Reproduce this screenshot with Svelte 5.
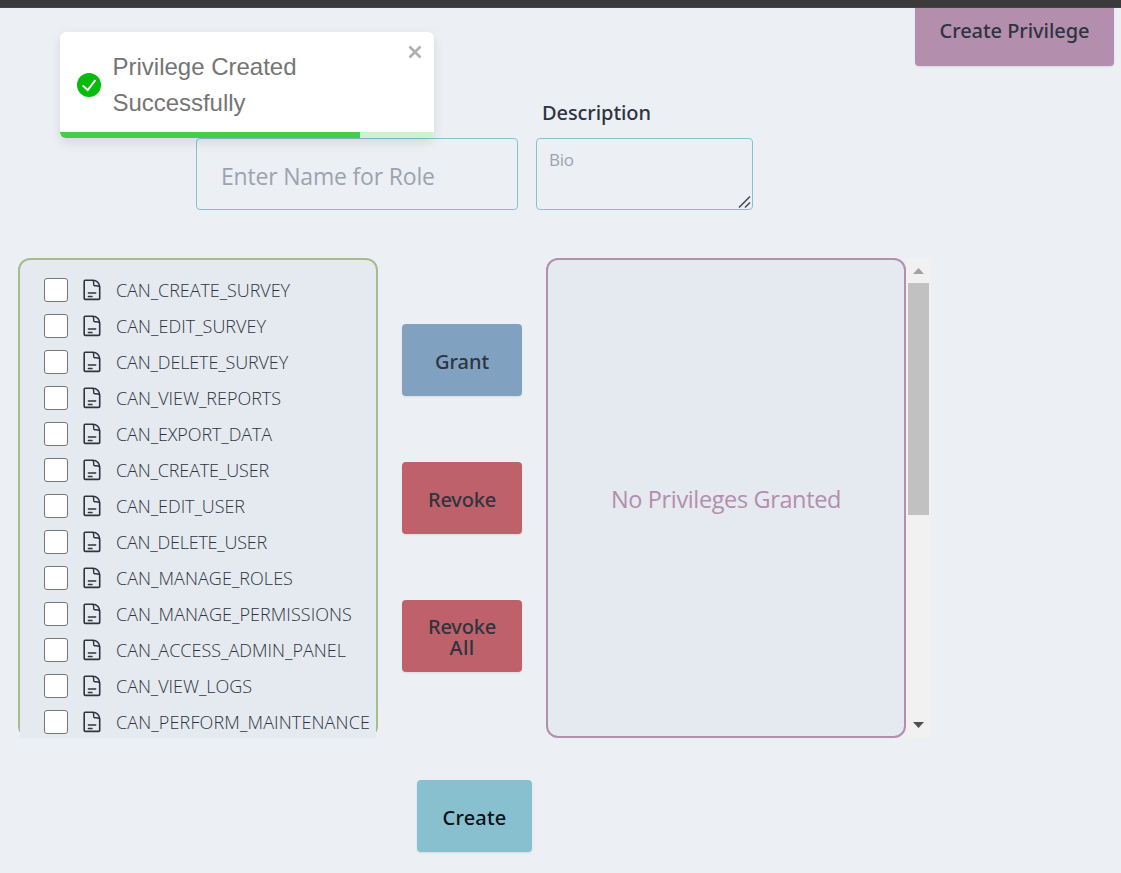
<script>
  const privileges = [
    { name: 'CAN_CREATE_SURVEY', width: 174 },
    { name: 'CAN_EDIT_SURVEY', width: 150 },
    { name: 'CAN_DELETE_SURVEY', width: 172 },
    { name: 'CAN_VIEW_REPORTS', width: 165 },
    { name: 'CAN_EXPORT_DATA', width: 156 },
    { name: 'CAN_CREATE_USER', width: 153 },
    { name: 'CAN_EDIT_USER', width: 129 },
    { name: 'CAN_DELETE_USER', width: 151 },
    { name: 'CAN_MANAGE_ROLES', width: 177 },
    { name: 'CAN_MANAGE_PERMISSIONS', width: 236 },
    { name: 'CAN_ACCESS_ADMIN_PANEL', width: 230 },
    { name: 'CAN_VIEW_LOGS', width: 136 },
    { name: 'CAN_PERFORM_MAINTENANCE', width: 254 }
  ];

  function fit(node, width) {
    const apply = () => {
      node.style.letterSpacing = '0px';
      const natural = node.getBoundingClientRect().width;
      node.style.letterSpacing = (width - natural) / node.textContent.length + 'px';
    };
    apply();
    document.fonts?.ready.then(apply);
  }
</script>

<div class="page">
  <div class="topbar"></div>
  <header><button class="btn privilege"><span use:fit={150}>Create Privilege</span></button></header>

  <div class="fields">
    <input class="role" aria-label="Role name" placeholder="Enter Name for Role" />
    <div class="description">
      <label for="bio"><span use:fit={109}>Description</span></label>
      <div class="bio-wrap">
        <textarea id="bio" placeholder="Bio"></textarea>
        <svg class="grip" width="14" height="14" viewBox="0 0 14 14"><path d="M1 12.5 12 1.5M7 12.5l5-5" stroke="#484b50" stroke-width="1.6" /></svg>
      </div>
    </div>
  </div>

  <main>
    <div class="available">
      <ul>
        {#each privileges as p}
          <li>
            <input type="checkbox" aria-label={p.name} />
            <svg width="24" height="24" viewBox="0 0 24 24" fill="none" stroke="#2e3440" stroke-width="1.6" stroke-linejoin="round" stroke-linecap="round">
              <path d="M5.2 2.3h7.6c4 0 6.9 3 6.9 7v11.1c0 .6-.4 1-1 1H5.2c-.6 0-1-.4-1-1V3.3c0-.6.4-1 1-1Z" />
              <path d="M12.8 2.5c1.3 1 .9 2.5.9 4.300 0 .6.4 1 1 1 1.8 0 3.5-.3 4.900 1" stroke-width="1.4" />
              <path d="M8.4 15h7.3M8.4 18.5h3.6" stroke-width="1.5" />
            </svg>
            <span use:fit={p.width}>{p.name}</span>
          </li>
        {/each}
      </ul>
    </div>
    <div class="actions">
      <button class="btn grant"><span use:fit={54}>Grant</span></button>
      <button class="btn revoke"><span use:fit={68}>Revoke</span></button>
      <button class="btn revoke two"><span use:fit={68}>Revoke</span><span use:fit={25}>All</span></button>
    </div>
    <div class="granted"><span use:fit={230}>No Privileges Granted</span></div>
    <div class="scrollbar">
      <svg width="25" height="25" viewBox="0 0 25 25"><path d="M7 16h11l-5.5-6Z" fill="#a3a3a3" /></svg>
      <div class="thumb"></div>
      <svg class="down" width="25" height="25" viewBox="0 0 25 25"><path d="M7 9h11l-5.5 6Z" fill="#505050" /></svg>
    </div>
  </main>

  <footer><button class="btn create"><span use:fit={64}>Create</span></button></footer>

  <div class="toast">
    <div class="message">
      <svg width="24" height="24" viewBox="0 0 24 24"><circle cx="12" cy="12" r="12" fill="#07bc0c" /><path d="m5.7 12.500 5 4.500L18.300 7.200" fill="none" stroke="#fff" stroke-width="1.9" /></svg>
      <p><span use:fit={184}>Privilege Created</span><br /><span use:fit={133}>Successfully</span></p>
      <svg class="close" width="14" height="14" viewBox="0 0 14 14"><path d="m1.500 1.500 11 11m0-11-11 11" stroke="#b0b0b0" stroke-width="2.7" /></svg>
    </div>
    <div class="progress"><div></div></div>
  </div>
</div>

<style>
  :global(body) { margin: 0; background: #eceff4; overflow: hidden; }
  * { box-sizing: border-box; }
  .page {
    position: relative;
    width: 1121px;
    height: 873px;
    overflow: hidden;
    background: #eceff4;
    color: #2e3440;
    font-family: "Noto Sans", "Open Sans", sans-serif;
    display: flex;
    flex-direction: column;
  }
  .topbar { height: 8px; background: #3b3b3b; border-bottom: 1px solid #444; flex: none; }
  header { display: flex; justify-content: flex-end; padding-right: 7px; height: 58px; flex: none; }
  .btn {
    border: 0;
    border-radius: 4px;
    height: 72px;
    padding: 3px 0 0;
    color: #2e3440;
    font: 500 20px/21px "Noto Sans", "Open Sans", sans-serif;
    display: flex;
    align-items: center;
    justify-content: center;
    box-shadow: 0 1px 2px rgba(0, 0, 0, 0.09);
  }
  .btn span, label span, li span, .granted span, p span { white-space: nowrap; }
  .privilege { width: 199px; height: 58px; border-radius: 0 0 4px 4px; background: #b48ead; padding: 0 0 14px; }
  .fields { height: 144px; flex: none; padding-left: 196px; display: flex; gap: 18px; align-items: flex-end; }
  .role {
    width: 322px;
    height: 72px;
    border: 1px solid #88c0d0;
    border-radius: 4px;
    background: transparent;
    padding: 3px 24px 0;
    font: 23px "Open Sans", "Noto Sans", sans-serif;
    letter-spacing: -0.19px;
  }
  ::placeholder { color: #9ca3af; opacity: 1; }
  .description { width: 217px; }
  label { display: block; padding-left: 6px; height: 39px; font-size: 20px; line-height: 27px; font-weight: 500; }
  .bio-wrap { position: relative; height: 72px; }
  textarea {
    display: block;
    width: 217px;
    height: 72px;
    border: 1px solid #88c0d0;
    border-radius: 4px;
    background: transparent;
    padding: 9px 12px;
    resize: none;
    font: 400 17px/24px "Open Sans", "Noto Sans", sans-serif;
    letter-spacing: -0.3px;
  }
  .grip { position: absolute; right: 1px; bottom: 1px; }
  main { display: flex; margin: 48px 0 0 18px; height: 480px; flex: none; }
  .available {
    width: 360px;
    height: 480px;
    padding-top: 12px;
    background: #e5e9f0;
    border: 2px solid #a3be8c;
    border-radius: 12px;
  }
  ul { list-style: none; margin: 0; padding: 0 0 0 24px; width: 356px; height: 466px; background: #e5e9f0; }
  li { display: flex; align-items: center; height: 36px; font-size: 18px; line-height: 24px; font-weight: 350; font-family: "Open Sans", "Noto Sans", sans-serif; }
  li span { margin-bottom: 1px; }
  li input { appearance: none; flex: none; width: 24px; height: 24px; margin: 0 12px 0 0; background: #fff; border: 1px solid #767676; border-radius: 3px; }
  li svg { flex: none; margin-right: 12px; }
  .actions { width: 168px; display: flex; flex-direction: column; align-items: center; padding-top: 66px; gap: 66px; }
  .actions .btn { width: 120px; }
  .grant { background: #81a1c1; }
  .revoke { background: #bf616a; }
  .two { flex-direction: column; padding-top: 1px; }
  .granted {
    width: 360px;
    border: 2px solid #b48ead;
    border-radius: 12px;
    background: #e5e9f0;
    color: #b48ead;
    display: flex;
    align-items: center;
    justify-content: center;
    font: 23.5px "Open Sans", "Noto Sans", sans-serif;
    padding-top: 2px;
  }
  .scrollbar { width: 25px; background: #f1f1f1; display: flex; flex-direction: column; align-items: center; }
  .thumb { width: 21px; height: 232px; background: #c1c1c1; }
  .down { margin-top: auto; }
  footer { padding: 42px 0 0 417px; }
  .create { width: 115px; background: #88c0d0; color: #0c1116; }
  .toast {
    position: absolute;
    left: 60px;
    top: 32px;
    width: 374px;
    height: 106px;
    background: #fff;
    border-radius: 6px;
    overflow: hidden;
    box-shadow: 0 4px 12px rgba(0, 0, 0, 0.1);
    display: flex;
    flex-direction: column;
  }
  .message { height: 100px; display: flex; padding: 0 12px 0 17px; align-items: center; }
  .message > svg { margin-top: 6px; flex: none; }
  .message p { margin: 6px 0 0 11.5px; flex: 1; color: #757575; font: 24px/36px "Liberation Sans", Arial, sans-serif; }
  .message .close { align-self: flex-start; margin-top: 13px; }
  .progress { height: 6px; background: #cdf2ce; }
  .progress div { height: 6px; width: 300px; background: #45cd49; }
</style>
